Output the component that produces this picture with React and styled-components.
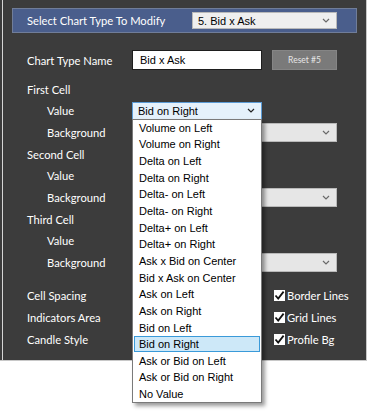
import React from "react";
import styled, { createGlobalStyle } from "styled-components";

const Global = createGlobalStyle`
  html, body { margin: 0; padding: 0; background: #ffffff; }
  body { font-family: Lato, "Liberation Sans", sans-serif; }
  * { box-sizing: border-box; }
`;

const Page = styled.div`
  width: 375px;
  height: 413px;
  background: #ffffff;
`;

const Panel = styled.div`
  position: relative;
  width: 367px;
  height: 361px;
  background: linear-gradient(to right, #3c3c3c 2px, #d6d6d6 2px, #d6d6d6 3px, #3c3c3c 3px);
  border-right: 1px solid #c8c8c8;
  border-bottom: 1px solid #c8c8c8;
  padding-top: 8px;
`;

const Header = styled.div`
  margin-left: 12px;
  width: 345px;
  height: 25px;
  background: #4a5e8c;
  border: 1px solid #707d99;
  display: flex;
  align-items: center;
  padding-left: 14px;
  padding-right: 19px;
`;

const Label = styled.div`
  flex: none;
  width: ${(p) => p.$width || 105}px;
  padding-left: ${(p) => p.$indent || 0}px;
  color: #ffffff;
  font-family: Lato, "Liberation Sans", sans-serif;
  font-size: 11.2px;
  white-space: nowrap;
`;

const Form = styled.div`
  padding-left: 27px;
  display: flex;
  flex-direction: column;
`;

const Row = styled.div`
  display: flex;
  align-items: center;
  height: ${(p) => p.$h}px;
  margin-top: ${(p) => p.$mt || 0}px;
`;

const Chevron = ({ color = "#6a6a6a" }) => (
  <svg width="8" height="5" viewBox="0 0 8 5" style={{ display: "block" }}>
    <path d="M1 1 L4 4 L7 1" fill="none" stroke={color} strokeWidth="1.2" />
  </svg>
);

const Select = styled.div`
  position: relative;
  flex: none;
  width: ${(p) => p.$w}px;
  height: ${(p) => p.$h || 18}px;
  margin-left: ${(p) => p.$ml || 0}px;
  background: ${(p) => (p.$open ? "#e5f1fb" : p.$light ? "#efefef" : "#e6e6e6")};
  border: 1px solid ${(p) => (p.$open ? "#5b9bd5" : "#b9b9b9")};
  display: flex;
  align-items: center;
  justify-content: space-between;
  padding: 0 6px 0 5px;
  font-family: "Liberation Sans", Arial, sans-serif;
  font-size: 11px;
  color: #000;
`;

const TextInput = styled.div`
  flex: none;
  width: 130px;
  height: 20px;
  background: #fff;
  border: 1px solid #1e1e1e;
  display: flex;
  align-items: center;
  padding-left: 7px;
  font-family: "Liberation Sans", Arial, sans-serif;
  font-size: 11px;
  color: #000;
`;

const ResetButton = styled.div`
  flex: none;
  width: 65px;
  height: 20px;
  margin-left: 10px;
  background: #7a7a7a;
  border: 1px solid #858585;
  display: flex;
  align-items: center;
  justify-content: center;
  color: #e6e6e6;
  font-family: Lato, "Liberation Sans", sans-serif;
  font-size: 8.5px;
`;

const List = styled.div`
  position: absolute;
  left: -1px;
  top: 100%;
  width: 130px;
  background: #fff;
  border: 1px solid #7a7a7a;
  box-shadow: 3px 3px 4px rgba(0, 0, 0, 0.4);
  z-index: 5;
  padding: 0 1px;
`;

const Item = styled.div`
  height: 16.65px;
  display: flex;
  align-items: center;
  padding-left: 4px;
  font-family: "Liberation Sans", Arial, sans-serif;
  font-size: 11px;
  color: #000;
  white-space: nowrap;
  background: ${(p) => (p.$active ? "#cde8f8" : "transparent")};
  border: 1px solid ${(p) => (p.$active ? "#3a9ad9" : "transparent")};
`;

const CheckWrap = styled.div`
  display: flex;
  align-items: center;
  margin-left: 12px;
  gap: 2px;
`;

const Box = styled.div`
  width: 11px;
  height: 11px;
  background: #fff;
  display: flex;
  align-items: center;
  justify-content: center;
`;

const Check = ({ label }) => (
  <CheckWrap>
    <Box>
      <svg width="11" height="11" viewBox="0 0 11 11">
        <path d="M1.5 5.5 L4.2 8.6 L9.6 1.6" fill="none" stroke="#111" strokeWidth="1.8" />
      </svg>
    </Box>
    <Label $width={80}>{label}</Label>
  </CheckWrap>
);

const options = [
  "Volume on Left",
  "Volume on Right",
  "Delta on Left",
  "Delta on Right",
  "Delta- on Left",
  "Delta- on Right",
  "Delta+ on Left",
  "Delta+ on Right",
  "Ask x Bid on Center",
  "Bid x Ask on Center",
  "Ask on Left",
  "Ask on Right",
  "Bid on Left",
  "Bid on Right",
  "Ask or Bid on Left",
  "Ask or Bid on Right",
  "No Value",
];

export default function App() {
  return (
    <Page>
      <Global />
      <Panel>
        <Header>
          <Label $width={165}>Select Chart Type To Modify</Label>
          <Select $w={145} $h={17} $light>
            <span>5. Bid x Ask</span>
            <Chevron />
          </Select>
        </Header>
        <Form>
          <Row $h={20} $mt={17}>
            <Label>Chart Type Name</Label>
            <TextInput>Bid x Ask</TextInput>
            <ResetButton>Reset #5</ResetButton>
          </Row>
          <Row $h={21} $mt={9}>
            <Label>First Cell</Label>
          </Row>
          <Row $h={21}>
            <Label $indent={20}>Value</Label>
            <Select $w={130} $open>
              <span>Bid on Right</span>
              <Chevron color="#222" />
              <List>
                {options.map((o) => (
                  <Item key={o} $active={o === "Bid on Right"}>
                    {o}
                  </Item>
                ))}
              </List>
            </Select>
          </Row>
          <Row $h={22}>
            <Label $indent={20}>Background</Label>
            <Select $w={205} $h={19}>
              <span />
              <Chevron />
            </Select>
          </Row>
          <Row $h={22}>
            <Label>Second Cell</Label>
          </Row>
          <Row $h={21}>
            <Label $indent={20}>Value</Label>
            <Select $w={130} />
          </Row>
          <Row $h={22}>
            <Label $indent={20}>Background</Label>
            <Select $w={205} $h={19}>
              <span />
              <Chevron />
            </Select>
          </Row>
          <Row $h={22}>
            <Label>Third Cell</Label>
          </Row>
          <Row $h={21}>
            <Label $indent={20}>Value</Label>
            <Select $w={130} />
          </Row>
          <Row $h={22}>
            <Label $indent={20}>Background</Label>
            <Select $w={205} $h={19}>
              <span />
              <Chevron />
            </Select>
          </Row>
          <Row $h={22} $mt={11}>
            <Label>Cell Spacing</Label>
            <Select $w={130} />
            <Check label="Border Lines" />
          </Row>
          <Row $h={22}>
            <Label>Indicators Area</Label>
            <Select $w={130} />
            <Check label="Grid Lines" />
          </Row>
          <Row $h={22}>
            <Label>Candle Style</Label>
            <Select $w={130} />
            <Check label="Profile Bg" />
          </Row>
        </Form>
      </Panel>
    </Page>
  );
}
